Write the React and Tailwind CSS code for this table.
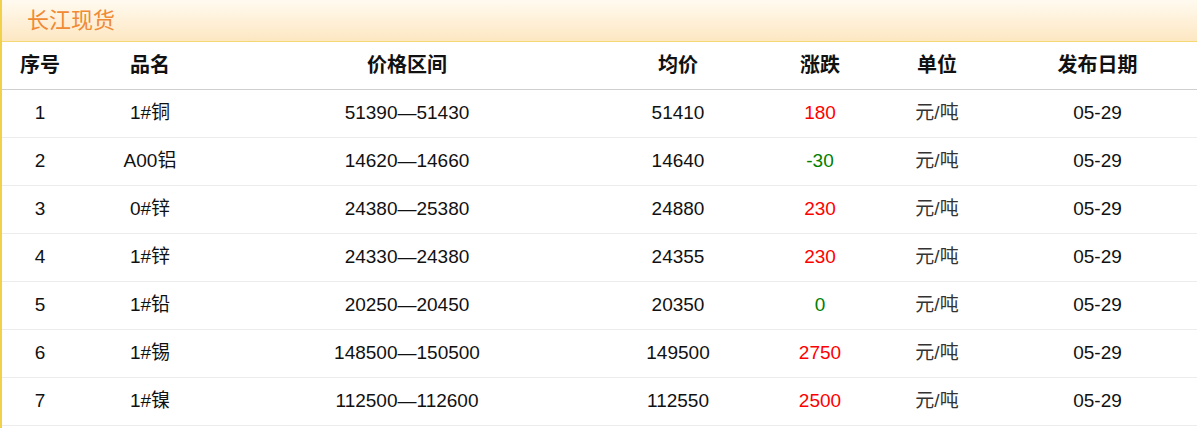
import React from 'react';

const cols = [
  { key: 'no', label: '序号', w: 'w-[76px]' },
  { key: 'name', label: '品名', w: 'w-[144px]' },
  { key: 'range', label: '价格区间', w: 'w-[370px]' },
  { key: 'avg', label: '均价', w: 'w-[172px]' },
  { key: 'chg', label: '涨跌', w: 'w-[112px]' },
  { key: 'unit', label: '单位', w: 'w-[122px]' },
  { key: 'date', label: '发布日期', w: 'w-[199px]' },
];

const rows = [
  { no: 1, name: '1#铜', range: '51390—51430', avg: '51410', chg: '180' },
  { no: 2, name: 'A00铝', range: '14620—14660', avg: '14640', chg: '-30' },
  { no: 3, name: '0#锌', range: '24380—25380', avg: '24880', chg: '230' },
  { no: 4, name: '1#锌', range: '24330—24380', avg: '24355', chg: '230' },
  { no: 5, name: '1#铅', range: '20250—20450', avg: '20350', chg: '0' },
  { no: 6, name: '1#锡', range: '148500—150500', avg: '149500', chg: '2750' },
  { no: 7, name: '1#镍', range: '112500—112600', avg: '112550', chg: '2500' },
];

const chgColor = (v) => {
  const n = Number(v);
  if (n > 0) return 'text-[#ff0000]';
  return 'text-[#008000]';
};

export default function App() {
  return (
    <div className="w-[1197px] h-[428px] overflow-hidden bg-white border-l-2 border-[#f1d04a] font-['Liberation_Sans','Noto_Sans_CJK_SC',sans-serif]">
      {/* title bar */}
      <div className="h-[42px] flex items-center pl-[25px] bg-gradient-to-b from-[#fffaf0] to-[#fde7c2] border-b border-[#f6d873]">
        <span className="text-[22px] text-[#ef8a35]">长江现货</span>
      </div>

      <table className="table-fixed border-collapse text-[19px] text-[#111]">
        <thead>
          <tr className="h-[47px] border-b border-[#cfcfcf]">
            {cols.map((c) => (
              <th key={c.key} className={`${c.w} text-[20px] font-bold text-center`}>{c.label}</th>
            ))}
          </tr>
        </thead>
        <tbody>
          {rows.map((r) => (
            <tr key={r.no} className="h-[48px] border-b border-[#ececec]">
              <td className="text-center">{r.no}</td>
              <td className="text-center">{r.name}</td>
              <td className="text-center">{r.range}</td>
              <td className="text-center">{r.avg}</td>
              <td className={`text-center ${chgColor(r.chg)}`}>{r.chg}</td>
              <td className="text-center text-[#333]">元/吨</td>
              <td className="text-center">05-29</td>
            </tr>
          ))}
        </tbody>
      </table>
    </div>
  );
}
